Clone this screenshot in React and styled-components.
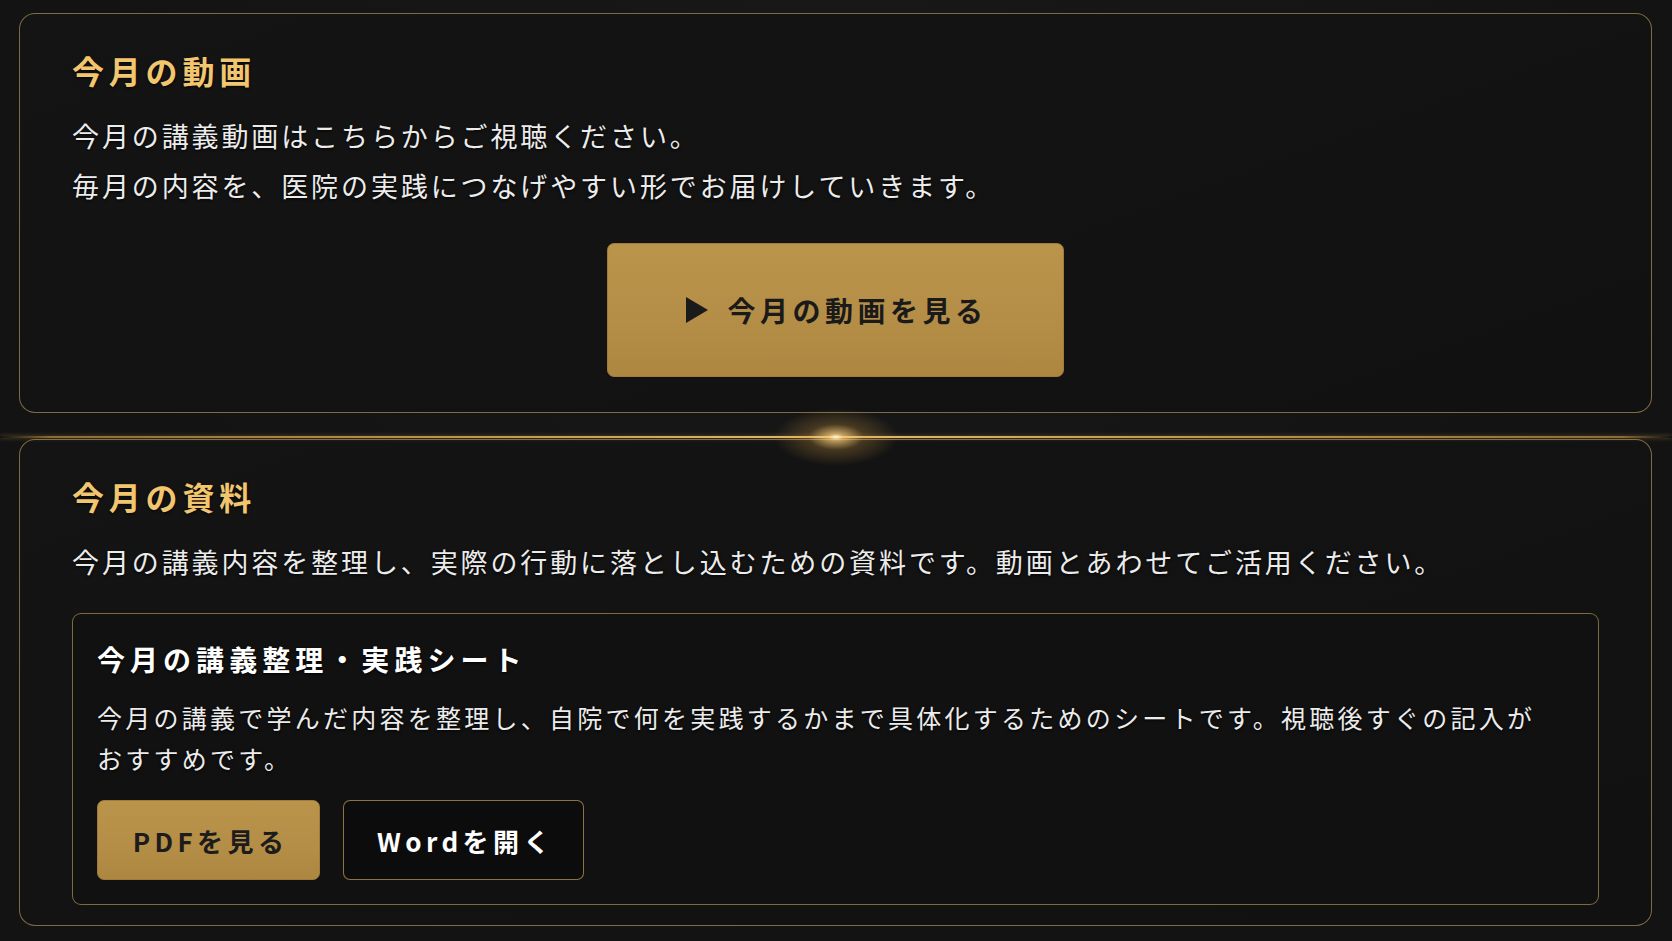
import React from "react";
import styled, { createGlobalStyle } from "styled-components";

const GlobalStyle = createGlobalStyle`
  * { box-sizing: border-box; }
  html, body {
    margin: 0;
    padding: 0;
    background: #141414;
  }
  body {
    font-family: "Noto Sans CJK JP", "Noto Sans", sans-serif;
    color: #ececec;
  }
`;

const Page = styled.div`
  min-height: 941px;
  padding: 13px 0 16px;
  background: radial-gradient(ellipse at 50% 0%, #181818 0%, #131313 70%);
`;

const Card = styled.section`
  margin: ${(p) => (p.$flush ? "1px" : "0")} 20px 0 19px;
  border: 1px solid rgba(196, 160, 92, 0.62);
  border-radius: 16px;
  background: linear-gradient(160deg, #141414 0%, #111111 100%);
  padding: 34px 52px ${(p) => p.$bottom}px;
  display: flex;
  flex-direction: column;
`;

const Title = styled.h2`
  margin: 0;
  font-size: 32px;
  line-height: 45px;
  font-weight: 700;
  letter-spacing: 0.15em;
  color: #f2c56f;
  text-shadow: 0 1px 3px rgba(0, 0, 0, 0.8);
`;

const Lead = styled.p`
  margin: 18px 0 0;
  font-size: 27px;
  line-height: 50px;
  font-weight: 400;
  letter-spacing: 0.107em;
  color: #ececec;
  text-shadow: 0 1px 3px rgba(0, 0, 0, 0.9);
`;

const Center = styled.div`
  display: flex;
  justify-content: center;
  margin-top: 32px;
`;

const WatchButton = styled.button`
  width: 457px;
  height: 134px;
  border: 1px solid #a07c3c;
  border-radius: 7px;
  background: linear-gradient(180deg, #bb944c 0%, #b48d46 60%, #ad8641 100%);
  display: flex;
  align-items: center;
  justify-content: center;
  gap: 20px;
  font-family: inherit;
  font-size: 28px;
  font-weight: 700;
  letter-spacing: 0.16em;
  color: #1a1a1a;
  cursor: pointer;
  padding: 0 0 0 2px;
  svg {
    flex: none;
  }
`;

const Divider = styled.div`
  position: relative;
  height: 2px;
  margin-top: 23px;
  background: linear-gradient(
    90deg,
    rgba(201, 160, 85, 0) 0%,
    rgba(180, 138, 66, 0.75) 3%,
    #c39a52 30%,
    #e4bb6e 50%,
    #c39a52 70%,
    rgba(180, 138, 66, 0.75) 97%,
    rgba(201, 160, 85, 0) 100%
  );
  box-shadow: 0 0 4px rgba(214, 168, 82, 0.45);
  &::after {
    content: "";
    position: absolute;
    left: 836px;
    top: 1px;
    width: 130px;
    height: 60px;
    transform: translate(-50%, -50%);
    background: radial-gradient(
      ellipse at center,
      rgba(255, 244, 210, 1) 0%,
      rgba(250, 205, 120, 0.75) 8%,
      rgba(220, 165, 70, 0.25) 30%,
      rgba(200, 150, 60, 0) 68%
    );
    pointer-events: none;
  }
`;

const Sheet = styled.div`
  margin: 26px 0 0;
  border: 1px solid rgba(196, 160, 92, 0.62);
  border-radius: 9px;
  background: #111111;
  padding: 26px 24px 24px;
`;

const SheetTitle = styled.h3`
  margin: 0;
  font-size: 28px;
  line-height: 39px;
  font-weight: 700;
  letter-spacing: 0.18em;
  color: #ffffff;
  text-shadow: 0 1px 3px rgba(0, 0, 0, 0.9);
`;

const SheetText = styled.p`
  margin: 18px 0 0;
  max-width: 1445px;
  font-size: 25px;
  line-height: 41px;
  letter-spacing: 0.13em;
  color: #ececec;
  text-shadow: 0 1px 3px rgba(0, 0, 0, 0.9);
`;

const Actions = styled.div`
  display: flex;
  gap: 23px;
  margin-top: 21px;
`;

const DocButton = styled.button`
  width: ${(p) => (p.$primary ? 223 : 241)}px;
  height: 80px;
  padding: 0 0 0 4px;
  border-radius: 7px;
  border: 1px solid ${(p) => (p.$primary ? "#a07c3c" : "rgba(196, 160, 92, 0.7)")};
  background: ${(p) =>
    p.$primary
      ? "linear-gradient(180deg, #bb944c 0%, #b48d46 60%, #ad8641 100%)"
      : "#0c0c0c"};
  color: ${(p) => (p.$primary ? "#1c1c1c" : "#ffffff")};
  font-family: inherit;
  font-size: 26px;
  font-weight: 700;
  letter-spacing: 0.17em;
  cursor: pointer;
`;

const PlayIcon = () => (
  <svg width="22" height="26" viewBox="0 0 22 26" aria-hidden="true">
    <polygon points="0,0 22,13 0,26" fill="#1a1a1a" />
  </svg>
);

export default function App() {
  return (
    <>
      <GlobalStyle />
      <Page>
        <Card $bottom={35}>
          <Title>今月の動画</Title>
          <Lead>
            今月の講義動画はこちらからご視聴ください。
            <br />
            毎月の内容を、医院の実践につなげやすい形でお届けしていきます。
          </Lead>
          <Center>
            <WatchButton>
              <PlayIcon />
              今月の動画を見る
            </WatchButton>
          </Center>
        </Card>

        <Divider />

        <Card $flush $bottom={20}>
          <Title>今月の資料</Title>
          <Lead>
            今月の講義内容を整理し、実際の行動に落とし込むための資料です。動画とあわせてご活用ください。
          </Lead>
          <Sheet>
            <SheetTitle>今月の講義整理・実践シート</SheetTitle>
            <SheetText>
              今月の講義で学んだ内容を整理し、自院で何を実践するかまで具体化するためのシートです。視聴後すぐの記入がおすすめです。
            </SheetText>
            <Actions>
              <DocButton $primary>PDFを見る</DocButton>
              <DocButton>Wordを開く</DocButton>
            </Actions>
          </Sheet>
        </Card>
      </Page>
    </>
  );
}
